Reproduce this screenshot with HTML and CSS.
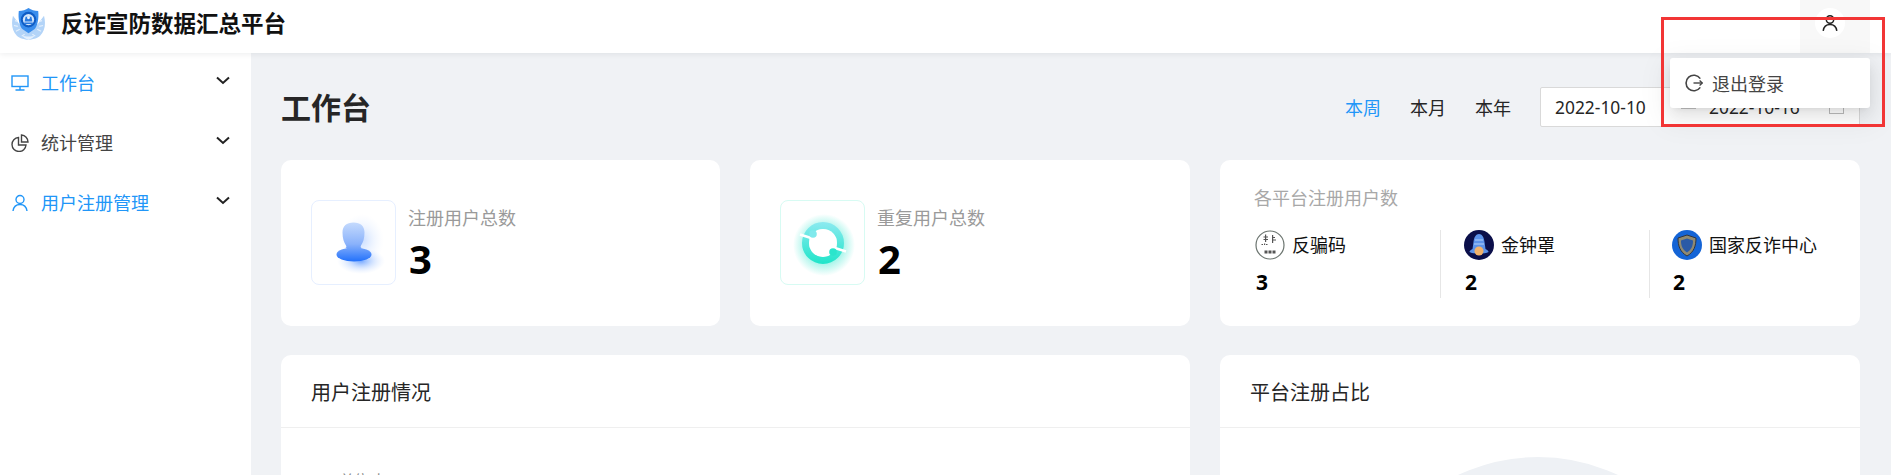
FILE: index.html
```html
<!DOCTYPE html>
<html lang="zh-CN">
<head>
<meta charset="utf-8">
<title>反诈宣防数据汇总平台</title>
<link rel="stylesheet" href="styles.css">
</head>
<body>
<header class="topbar">
  <div class="brand">
    <svg class="logo" viewBox="0 0 34 34">
      <path d="M1 9C-1 17 0 25 5 29.500c3 3 8 3.500 12 4.500 4-1 9-1.500 12-4.500 5-4.500 6-12.500 4-20.500l-6 8-10 9-10-9z" fill="#b3d4f8"/>
      <path d="M3 14l3 1M2 19l4 1M4 25l4-2M31 14l-3 1M32 19l-4 1M30 25l-4-2M10 30l3-2M24 30l-3-2" stroke="#e4f0fd" stroke-width="1.200"/>
      <path d="M17 1c3 2 6 3 10 3 1 8-1 16-4 19l-6 4-6-4C8 20 6 12 7 4c4 0 7-1 10-3z" fill="#3a8eed"/>
      <circle cx="17" cy="13" r="8" fill="#0f5cc4"/>
      <circle cx="17" cy="13" r="5.800" fill="#d5e7fc"/>
      <path d="M12.500 16h9v1.600h-9zM14 10h6l1 5h-8z" fill="#2a7be0"/>
      <circle cx="17" cy="11" r="1.500" fill="#e8f2fe"/>
      <path d="M10 29c4 2 10 2 14 0l-3 3-4 2-4-2z" fill="#e4f0fd"/>
    </svg>
    <span class="brand-name">反诈宣防数据汇总平台</span>
  </div>
  <div class="account">
    <span class="account-circle">
      <svg class="account-icon" viewBox="0 0 16 16" fill="none" stroke="#222" stroke-width="1.500"><circle cx="8" cy="4.500" r="3.700"/><path d="M1.200 15.800c.5-3.800 3-6.300 6.800-6.300s6.300 2.500 6.800 6.300"/></svg>
    </span>
  </div>
</header>

<div class="dropdown">
  <svg class="logout-icon" viewBox="0 0 18 18" fill="none" stroke="#444" stroke-width="1.600"><path d="M15.300 4.600A7.800 7.800 0 1 0 15.300 13.400"/><path d="M8.500 9h8.700" stroke-width="1.400"/><path d="M14.600 6.600 17.200 9l-2.600 2.400" stroke-width="1.300"/></svg>
  <span>退出登录</span>
</div>
<div class="annot"></div>

<div class="shell">
  <nav class="sidebar">
    <a class="menu-item is-blue">
      <svg class="menu-icon" viewBox="0 0 18 18" fill="none" stroke="currentColor" stroke-width="1.400"><rect x="1" y="2" width="16" height="10.500"/><path d="M9 12.500V16M4.500 16h9"/></svg>
      <span class="menu-label">工作台</span>
      <svg class="chev" viewBox="0 0 14 9" fill="none" stroke="#222" stroke-width="2"><path d="M1 1.500 7 7l6-5.500"/></svg>
    </a>
    <a class="menu-item">
      <svg class="menu-icon" viewBox="0 0 18 18" fill="none" stroke="currentColor" stroke-width="1.400"><path d="M7.500 3.500A7 7 0 1 0 15 11H7.500z"/><path d="M10.500 1a7 7 0 0 1 6.500 7h-6.500z"/></svg>
      <span class="menu-label">统计管理</span>
      <svg class="chev" viewBox="0 0 14 9" fill="none" stroke="#222" stroke-width="2"><path d="M1 1.500 7 7l6-5.500"/></svg>
    </a>
    <a class="menu-item is-blue">
      <svg class="menu-icon" viewBox="0 0 18 18" fill="none" stroke="currentColor" stroke-width="1.400"><circle cx="9" cy="5.500" r="4"/><path d="M2 17c.6-4 3-6.500 7-6.500s6.400 2.500 7 6.500"/></svg>
      <span class="menu-label">用户注册管理</span>
      <svg class="chev" viewBox="0 0 14 9" fill="none" stroke="#222" stroke-width="2"><path d="M1 1.500 7 7l6-5.500"/></svg>
    </a>
  </nav>

  <main class="main">
    <div class="page-head">
      <h1 class="page-title">工作台</h1>
      <div class="filters">
        <span class="range is-active">本周</span>
        <span class="range">本月</span>
        <span class="range">本年</span>
        <div class="picker">
          <span class="date">2022-10-10</span>
          <span class="sep"></span>
          <span class="date">2022-10-16</span>
          <span class="cal"></span>
        </div>
      </div>
    </div>

    <div class="stats">
      <section class="card stat">
        <div class="stat-icon stat-icon-blue">
          <svg viewBox="0 0 70 70" width="70" height="70">
            <defs>
              <linearGradient id="gu" gradientUnits="userSpaceOnUse" x1="0" y1="14" x2="0" y2="54"><stop offset="0" stop-color="#c6dbfd"/><stop offset=".55" stop-color="#8ab2fb"/><stop offset="1" stop-color="#1f6ffb"/></linearGradient>
              <radialGradient id="gg"><stop offset="0" stop-color="#3f85ff" stop-opacity=".7"/><stop offset=".55" stop-color="#7eaeff" stop-opacity=".28"/><stop offset="1" stop-color="#b5d0ff" stop-opacity="0"/></radialGradient>
            </defs>
            <ellipse cx="43" cy="32" rx="22" ry="26" fill="url(#gg)" opacity=".4"/>
            <ellipse cx="42" cy="53" rx="24" ry="13" fill="url(#gg)"/>
            <path d="M34.500 14.500c7 0 11 3.500 11 10 0 6-1.500 10-3.500 13-1 2 0 2.500 2 2.500H25c2 0 3-.5 2-2.500-2-3-3.500-7-3.500-13 0-6.500 4-10 11-10z" fill="url(#gu)"/>
            <ellipse cx="35" cy="46.500" rx="17.500" ry="7" fill="url(#gu)"/>
          </svg>
        </div>
        <div class="stat-text">
          <div class="stat-label">注册用户总数</div>
          <div class="stat-value">3</div>
        </div>
      </section>

      <section class="card stat">
        <div class="stat-icon stat-icon-green">
          <svg viewBox="0 0 70 70" width="70" height="70">
            <defs>
              <linearGradient id="gt" gradientUnits="userSpaceOnUse" x1="0" y1="14" x2="0" y2="56"><stop offset="0" stop-color="#8ceaf0"/><stop offset="1" stop-color="#1fe5c9"/></linearGradient>
              <radialGradient id="gh"><stop offset=".55" stop-color="#3de8d0" stop-opacity=".5"/><stop offset="1" stop-color="#3de8d0" stop-opacity="0"/></radialGradient>
            </defs>
            <circle cx="36" cy="37" r="31" fill="url(#gh)"/>
            <circle cx="35" cy="35" r="17.500" fill="none" stroke="url(#gt)" stroke-width="7"/>
            <circle cx="35" cy="35" r="14" fill="#fff"/>
            <path d="M12 26.500 31 32.500M58 43.500 39 37.500" stroke="#fff" stroke-width="2.600"/>
            <circle cx="25" cy="26" r="3.800" fill="#80e9ec"/>
            <circle cx="45" cy="44" r="3.800" fill="#2ae5cc"/>
          </svg>
        </div>
        <div class="stat-text">
          <div class="stat-label">重复用户总数</div>
          <div class="stat-value">2</div>
        </div>
      </section>

      <section class="card platforms">
        <div class="platforms-title">各平台注册用户数</div>
        <div class="platform-row">
          <div class="platform">
            <div class="platform-head">
              <svg class="avatar" viewBox="0 0 30 30">
                <circle cx="15" cy="15" r="14" fill="#fff" stroke="#6b746f" stroke-width="1.200"/>
                <path d="M10 4.500h1.200v2H13v1h-1.800V9H13v1h-1.800v2H10v-2H8.500V9H10V7.500H8.500v-1H10zM17 5h1.200v2H20v1h-1.800v1.500H21v1h-2.800V13H17zM6.500 14h1.500v1H6.500zM9 13.500h1.200v1.500H9zM11 14h1.500v1H11z" fill="#555"/>
                <path d="M9.500 20.500h3v3h-3zM13.500 20.500h3v3h-3zM17.500 20.500h3v3h-3z" fill="#555"/>
              </svg>
              <span class="platform-name">反骗码</span>
            </div>
            <div class="platform-value">3</div>
          </div>
          <div class="platform">
            <div class="platform-head">
              <svg class="avatar" viewBox="0 0 30 30">
                <circle cx="15" cy="15" r="15" fill="#0b0f4a"/>
                <path d="M15 4c3 0 5 3 5.500 8l1 7c2 1 3 2 3 3-3 2-16 2-19 0 0-1 1-2 3-3l1-7c.5-5 2.500-8 5.500-8z" fill="#5d93ea"/>
                <path d="M11 10h8M10 14h10" stroke="#b5d2f7" stroke-width="1.200"/>
                <circle cx="15" cy="21" r="4.500" fill="#f3b26a"/>
              </svg>
              <span class="platform-name">金钟罩</span>
            </div>
            <div class="platform-value">2</div>
          </div>
          <div class="platform">
            <div class="platform-head">
              <svg class="avatar" viewBox="0 0 30 30">
                <circle cx="15" cy="15" r="15" fill="#1464d6"/>
                <path d="M15 5l9 3c0 8-2 14-9 18-7-4-9-10-9-18z" fill="#8f8a72" stroke="#2f3540"/>
                <path d="M15 8.500l6 2c0 5.500-1.500 9-6 12-4.500-3-6-6.500-6-12z" fill="#2a5aa6"/>
              </svg>
              <span class="platform-name">国家反诈中心</span>
            </div>
            <div class="platform-value">2</div>
          </div>
        </div>
      </section>
    </div>

    <div class="panels">
      <section class="card panel">
        <div class="panel-head">用户注册情况</div>
        <div class="panel-body"><span class="unit">单位:人</span></div>
      </section>
      <section class="card panel">
        <div class="panel-head">平台注册占比</div>
        <div class="panel-body panel-body-center"><div class="donut"></div></div>
      </section>
    </div>
  </main>
</div>
</body>
</html>
```
FILE: styles.css
```css
* { box-sizing: border-box; }
html, body { margin: 0; height: 475px; overflow: hidden; }
body {
  background: #f0f2f5;
  color: #262626;
  font-family: "Noto Sans", "Noto Sans CJK SC", sans-serif;
  position: relative;
}
.topbar {
  height: 53px;
  background: #fff;
  display: flex;
  justify-content: space-between;
  padding-left: 12px;
  padding-right: 21px;
  box-shadow: 0 1px 6px rgba(0, 21, 41, .08);
  position: relative;
  z-index: 2;
}
.brand { display: flex; align-items: center; gap: 16px; }
.logo { width: 33px; height: 33px; margin-top: -6px; }
.brand-name { font-size: 22.5px; font-weight: 700; color: #111; line-height: 1; margin-top: -5px; }
.account {
  width: 70px;
  height: 53px;
  background: #f8f8f8;
  padding: 8px 0 0 15px;
}
.account-circle {
  width: 30px; height: 30px; border-radius: 50%; background: #fff;
  display: flex; align-items: center; justify-content: center;
}
.account-icon { width: 16px; height: 16px; }
.dropdown {
  position: absolute;
  left: 1670px; top: 58px;
  width: 200px; height: 50px;
  background: #fff;
  border-radius: 3px;
  box-shadow: 0 3px 6px -4px rgba(0, 0, 0, .12), 0 6px 16px rgba(0, 0, 0, .08), 0 9px 28px 8px rgba(0, 0, 0, .05);
  display: flex;
  align-items: center;
  gap: 9px;
  padding-left: 15px;
  font-size: 18px;
  color: #444;
  z-index: 5;
}
.logout-icon { width: 18px; height: 18px; }
.annot {
  position: absolute;
  left: 1661px; top: 17px;
  width: 224px; height: 110px;
  border: 3px solid #f23535;
  z-index: 6;
}
.shell { display: flex; height: 422px; }
.sidebar {
  width: 251px;
  flex: none;
  background: #fff;
  font-size: 18px;
}
.menu-item {
  height: 60px;
  display: flex;
  align-items: center;
  padding-left: 11px;
  padding-right: 21px;
  color: #444;
}
.menu-item.is-blue { color: #2196f8; }
.menu-icon { width: 18px; height: 18px; flex: none; }
.menu-label { margin-left: 12px; flex: 1; line-height: 1; }
.chev { width: 14px; height: 9px; margin-top: -5px; }
.main { flex: 1; padding: 0 31px 0 30px; min-width: 0; }
.page-head {
  height: 107px;
  display: flex;
  align-items: center;
  justify-content: space-between;
}
.page-title { margin: 3px 0 0; font-size: 30px; font-weight: 700; color: #262626; line-height: 1; }
.filters { display: flex; align-items: center; }
.range { font-size: 18px; width: 65px; color: #262626; margin-top: 1px; }
.range.is-active { color: #2196f8; }
.picker {
  width: 320px; height: 40px;
  background: #fff;
  border: 1px solid #d9d9d9;
  border-radius: 2px;
  display: flex;
  align-items: center;
  padding-left: 14px;
  font-size: 17.4px;
  color: #262626;
}
.date { width: 91px; flex: none; }
.sep { width: 15px; height: 4px; margin: 0 13px 0 35px; background: #c4c4c4; flex: none; }
.cal { width: 15px; height: 14px; border: 1px solid #bbb; margin-left: 29px; flex: none; }
.stats { display: grid; grid-template-columns: 439px 440px 640px; gap: 30px; height: 165px; }
.card { background: #fff; border-radius: 10px; }
.stat { padding: 40px 30px; display: flex; gap: 12px; }
.stat-icon {
  width: 85px; height: 85px;
  border-radius: 8px;
  border: 1px solid #e6efff;
  display: flex; align-items: center; justify-content: center;
}
.stat-icon-green { border-color: #d7fbf3; }
.stat-label { font-size: 18px; line-height: 26px; color: #9a9a9a; margin-top: 5px; }
.stat-value { font-size: 40px; font-weight: 700; color: #000; line-height: 54px; margin-top: 1px; padding-left: 1px; }
.platforms { padding: 24px 0 0 35px; }
.platforms-title { font-size: 18px; line-height: 28px; color: #a8a8a8; margin-left: -1px; }
.platform-row { display: grid; grid-template-columns: 209px 209px 1fr; margin-top: 18px; }
.platform { width: 186px; height: 68px; border-right: 1px solid #e6e6e6; }
.platform:last-child { width: auto; border-right: 0; margin-left: -1px; }
.platform-head { display: flex; align-items: center; gap: 7px; height: 30px; }
.avatar { width: 30px; height: 30px; flex: none; }
.platform-name { font-size: 18px; color: #111; line-height: 1; }
.platform-value { font-size: 21px; font-weight: 700; color: #000; line-height: 28px; margin-top: 8px; padding-left: 1px; }
.panels { display: flex; gap: 30px; margin-top: 30px; }
.panel { flex: none; height: 300px; overflow: hidden; }
.panel:first-child { width: 909px; }
.panel:last-child { width: 640px; }
.panel-head {
  height: 73px;
  padding-left: 30px;
  display: flex; align-items: center;
  border-bottom: 1px solid #efefef;
  font-size: 20px;
  color: #262626;
}
.panel-body { padding: 42px 0 0 59px; }
.panel-body-center { padding: 29px 0 0; display: flex; justify-content: center; }
.unit { font-size: 14px; color: #888; line-height: 20px; display: block; }
.donut { width: 374px; height: 374px; border-radius: 50%; border: 90px solid #eef1f5; flex: none; margin-left: -4px; }
```
